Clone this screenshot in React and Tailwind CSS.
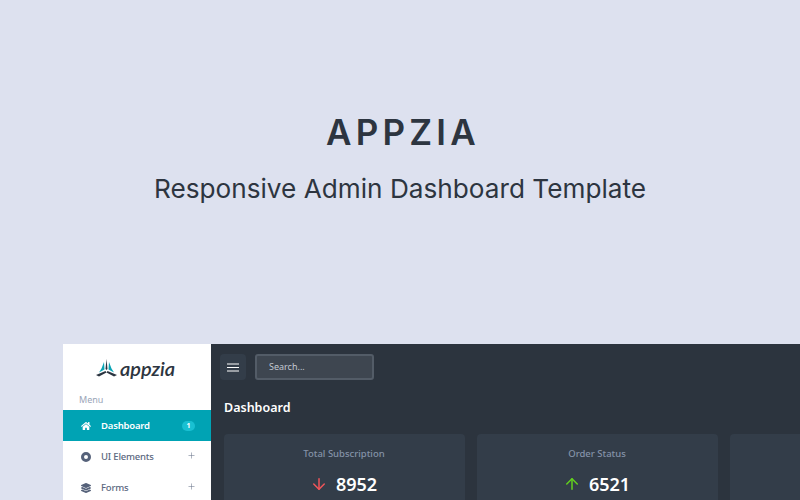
import React from "react";
import { FaHome, FaLayerGroup } from "react-icons/fa";
import { ArrowDown, ArrowUp, Plus } from "lucide-react";

const Logo = () => (
  <svg width="21" height="18" viewBox="0 0 21 18">
    <path d="M10.5 0 L11.5 10 L10.5 11 L9.5 10 Z" fill="#2b3440" />
    <path d="M8 3 L8.5 10.5 L3 13.5 L5.5 9.5 Z" fill="#0aa5b5" />
    <path d="M13 3 L12.5 10.5 L18 13.5 L15.5 9.5 Z" fill="#0aa5b5" />
    <path d="M0 16 L9.5 12 L10.5 13.5 L3 17.5 Z" fill="#2b3440" />
    <path d="M21 16 L11.5 12 L10.5 13.5 L18 17.5 Z" fill="#2b3440" />
  </svg>
);

const Burger = () => (
  <svg width="12" height="9" viewBox="0 0 12 9" fill="none" stroke="#ffffff" strokeWidth="1">
    <path d="M0 1H12M0 4.5H12M0 8H12" />
  </svg>
);

const NavItem = ({ icon, label }) => (
  <div className="flex items-center h-[31px] pl-[18px] pr-[15px] pt-[1px] text-[9.5px] tracking-[-0.02em] font-medium text-[#5b6880]">
    <span className="w-5 flex items-center">{icon}</span>
    <span className="flex-1">{label}</span>
    <Plus size={9} strokeWidth={1.5} className="text-[#6f7a8e] -mt-[3px]" />
  </div>
);

const StatCard = ({ title, value, icon }) => (
  <div className="w-[241px] shrink-0 h-[80px] rounded-sm bg-[#333d49] pt-3 flex flex-col items-center">
    <div className="text-[9.5px] leading-[16px] font-medium text-[#8492a8]">{title}</div>
    <div className="flex items-center gap-2 mt-2 h-7 -ml-[1px]">
      {icon}
      <span className="text-[18px] font-semibold text-white">{value}</span>
    </div>
  </div>
);

export default function App() {
  return (
    <div className="w-[800px] h-[500px] overflow-hidden bg-[#dde1ef]">
      <div className="h-[344px] pt-[107px] flex flex-col items-center text-[#2d3540] font-['Inter',sans-serif]">
        <h1 className="ml-[6px] text-[35px] leading-[50px] font-semibold tracking-[0.12em]">APPZIA</h1>
        <p className="mt-[7px] text-[26.2px] leading-[50px]">Responsive Admin Dashboard Template</p>
      </div>

      <div className="ml-[63px] h-[156px] flex overflow-hidden font-['Noto_Sans',sans-serif]">
        <aside className="w-[148px] shrink-0 bg-white">
          <div className="h-[46px] flex items-center justify-center gap-[3px] pt-[1px] pr-[3px]">
            <Logo />
            <span className="text-[20px] font-['Lato',sans-serif] italic font-semibold text-[#2d3540]">appzia</span>
          </div>
          <div className="h-[20px] pl-4 pt-[2px] text-[9px] leading-[16px] text-[#9aa5b8]">Menu</div>
          <div className="flex items-center h-[31px] pl-[18px] pr-4 pt-[1px] bg-[#00a3b4] text-[9.5px] tracking-[-0.02em] font-semibold text-white">
            <span className="w-5 flex items-center">
              <FaHome size={10} />
            </span>
            <span className="flex-1">Dashboard</span>
            <span className="w-[13px] h-[10px] rounded-full bg-[#19c0d2] text-[7px] leading-[10px] font-bold text-center">1</span>
          </div>
          <NavItem
            icon={<span className="block w-[10px] h-[10px] rounded-full border-[3.5px] border-[#56627a]" />}
            label="UI Elements"
          />
          <NavItem icon={<FaLayerGroup size={10} className="text-[#56627a]" />} label="Forms" />
        </aside>

        <main className="flex-1 min-w-0 bg-[#2c343e]">
          <div className="flex items-center h-[46px] pl-[9px] gap-[9px]">
            <div className="w-[26px] h-[26px] rounded-sm bg-[#333d49] flex items-center justify-center">
              <Burger />
            </div>
            <div className="w-[119px] h-[26px] rounded-[3px] border-2 border-[#535c67] bg-[#3e4650] pl-3 text-[9px] leading-[21px] text-[#c3c8d0]">
              Search...
            </div>
          </div>
          <h2 className="pl-[13px] mt-2 text-[12.5px] leading-[20px] font-semibold text-white">Dashboard</h2>
          <div className="flex gap-3 pl-[12.5px] mt-4">
            <StatCard
              title="Total Subscription"
              value="8952"
              icon={<ArrowDown size={18} strokeWidth={2} className="text-[#f0555a]" />}
            />
            <StatCard
              title="Order Status"
              value="6521"
              icon={<ArrowUp size={18} strokeWidth={2} className="text-[#62d01e]" />}
            />
            <StatCard title="" value="" icon={null} />
          </div>
        </main>
      </div>
    </div>
  );
}
